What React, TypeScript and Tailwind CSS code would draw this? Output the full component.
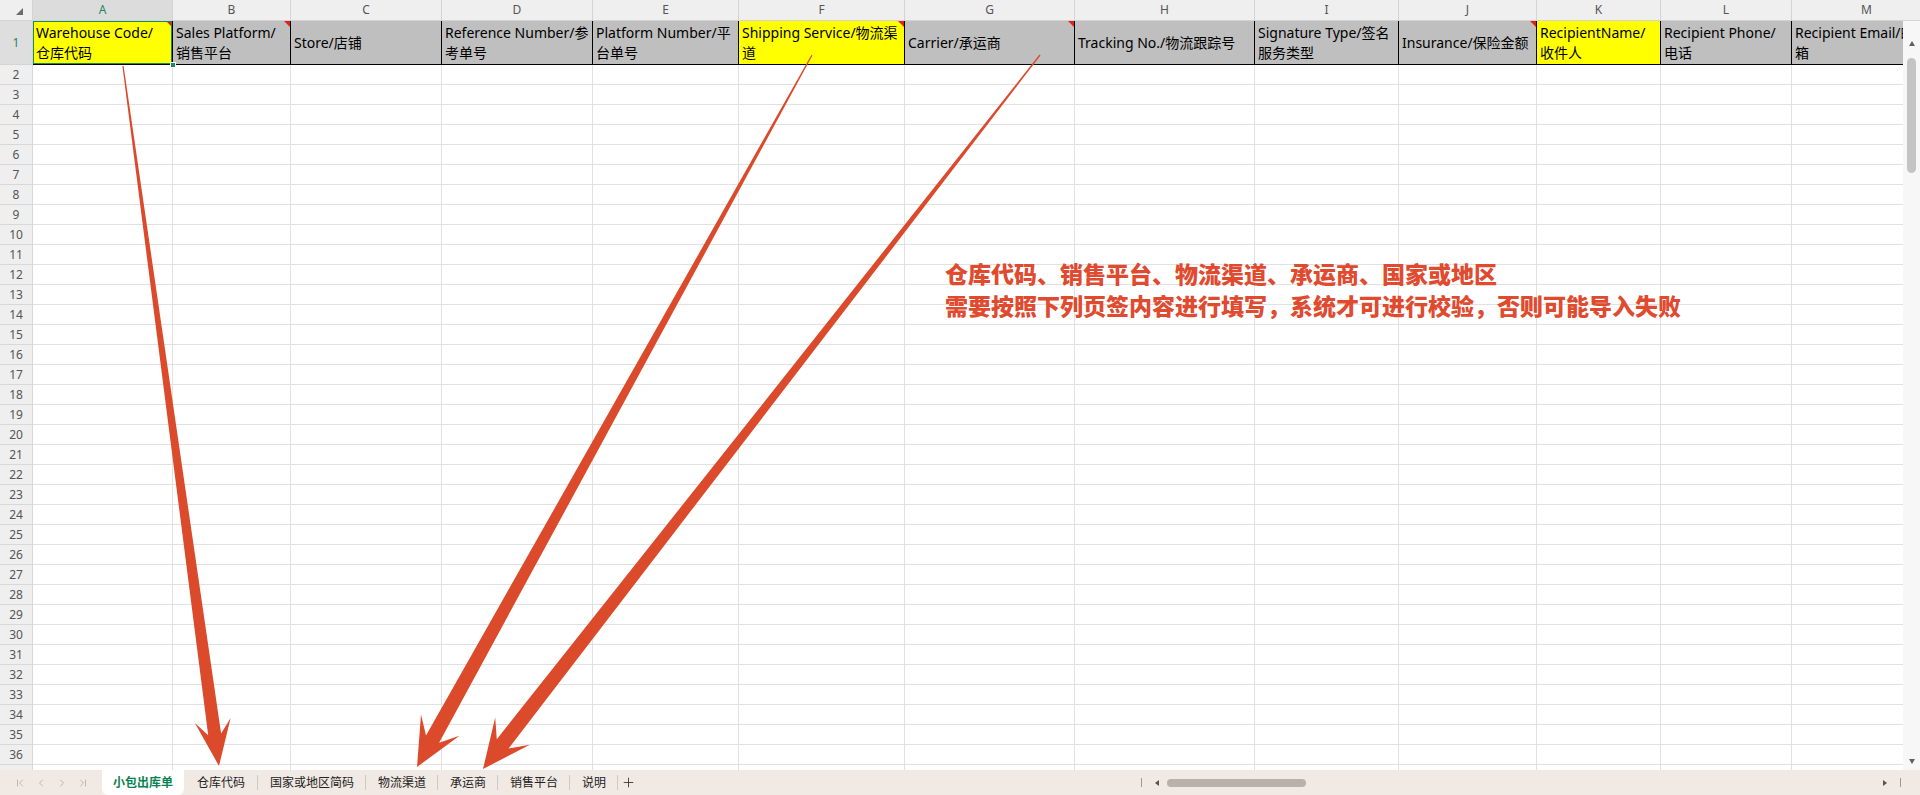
import { ChevronFirst, ChevronLast, ChevronLeft, ChevronRight, Plus } from "lucide-react";
import clsx from "clsx";

type Col = {
  key: string;
  w: string;
  lines: string[];
  fill: string;
  note?: boolean;
};

const cols: Col[] = [
  { key: "A", w: "w-[140px]", lines: ["Warehouse Code/", "仓库代码"], fill: "bg-[#ffff00]", note: true },
  { key: "B", w: "w-[118px]", lines: ["Sales Platform/", "销售平台"], fill: "bg-[#bfbfbf]", note: true },
  { key: "C", w: "w-[151px]", lines: ["Store/店铺"], fill: "bg-[#bfbfbf]" },
  { key: "D", w: "w-[151px]", lines: ["Reference Number/参", "考单号"], fill: "bg-[#bfbfbf]" },
  { key: "E", w: "w-[146px]", lines: ["Platform Number/平", "台单号"], fill: "bg-[#bfbfbf]" },
  { key: "F", w: "w-[166px]", lines: ["Shipping Service/物流渠", "道"], fill: "bg-[#ffff00]", note: true },
  { key: "G", w: "w-[170px]", lines: ["Carrier/承运商"], fill: "bg-[#bfbfbf]", note: true },
  { key: "H", w: "w-[180px]", lines: ["Tracking No./物流跟踪号"], fill: "bg-[#bfbfbf]" },
  { key: "I", w: "w-[144px]", lines: ["Signature Type/签名", "服务类型"], fill: "bg-[#bfbfbf]" },
  { key: "J", w: "w-[138px]", lines: ["Insurance/保险金额"], fill: "bg-[#bfbfbf]", note: true },
  { key: "K", w: "w-[124px]", lines: ["RecipientName/", "收件人"], fill: "bg-[#ffff00]" },
  { key: "L", w: "w-[131px]", lines: ["Recipient Phone/", "电话"], fill: "bg-[#bfbfbf]" },
  { key: "M", w: "w-[150px]", lines: ["Recipient Email/邮", "箱"], fill: "bg-[#bfbfbf]" },
];

const rows = Array.from({ length: 36 }, (_, i) => i + 2);

const tabs = [
  { name: "小包出库单", w: "w-[82px]", active: true },
  { name: "仓库代码", w: "w-[74px]" },
  { name: "国家或地区简码", w: "w-[108px]" },
  { name: "物流渠道", w: "w-[72px]" },
  { name: "承运商", w: "w-[60px]" },
  { name: "销售平台", w: "w-[72px]" },
  { name: "说明", w: "w-[48px]" },
];

// tapered callout arrow: thin at the start, widening toward a swept-back head
function arrowPoints(
  sx: number,
  sy: number,
  tx: number,
  ty: number,
  w1: number,
  neck: number,
  barb: number,
  half: number
) {
  const len = Math.hypot(tx - sx, ty - sy);
  const ux = (tx - sx) / len;
  const uy = (ty - sy) / len;
  const nx = -uy;
  const ny = ux;
  const p = (x: number, y: number) => `${x.toFixed(1)},${y.toFixed(1)}`;
  const nkx = tx - ux * neck;
  const nky = ty - uy * neck;
  const bx = tx - ux * barb;
  const by = ty - uy * barb;
  return [
    p(sx + nx * 0.6, sy + ny * 0.6),
    p(nkx + (nx * w1) / 2, nky + (ny * w1) / 2),
    p(bx + nx * half, by + ny * half),
    p(tx, ty),
    p(bx - nx * half, by - ny * half),
    p(nkx - (nx * w1) / 2, nky - (ny * w1) / 2),
    p(sx - nx * 0.6, sy - ny * 0.6),
  ].join(" ");
}

function Arrows() {
  return (
    <svg className="pointer-events-none absolute left-0 top-0" width="1920" height="795">
      <polygon points={arrowPoints(123, 66, 219, 766, 13, 32, 46, 18)} fill="#dc4a2c" />
      <polygon points={arrowPoints(812, 55, 417, 767, 15, 32, 48, 22)} fill="#dc4a2c" />
      <polygon points={arrowPoints(1040, 55, 483, 769, 15, 32, 48, 22)} fill="#dc4a2c" />
    </svg>
  );
}

function HeaderCell({ col }: { col: Col }) {
  const selected = col.key === "A";
  return (
    <div
      className={clsx(
        "relative flex h-full shrink-0 items-center overflow-hidden whitespace-nowrap border-b border-r border-black px-[3px] text-[14px] leading-[20px] text-black",
        col.w,
        col.fill
      )}
    >
      <div className="flex flex-col">
        {col.lines.map((l) => (
          <span key={l}>{l}</span>
        ))}
      </div>
      {col.note && (
        <span className="absolute right-0 top-0 h-0 w-0 border-l-[6px] border-t-[6px] border-l-transparent border-t-[#e0201b]" />
      )}
      {selected && <span className="absolute inset-[-1px] border-2 border-[#1c8a5a]" />}
    </div>
  );
}

export default function App() {
  return (
    <div className="relative flex h-[795px] w-[1920px] flex-col overflow-hidden bg-white font-['Noto_Sans','Noto_Sans_CJK_SC',sans-serif]">
      <div className="flex h-[770px] shrink-0">
        {/* sheet grid */}
        <div className="relative h-full w-[1903px] shrink-0 overflow-hidden">
          <div className="flex h-[21px] border-b border-[#d4d4d4] bg-[#efefef] text-[12px] text-[#555]">
            <div className="relative w-[33px] shrink-0 border-r border-[#d4d4d4]">
              <span className="absolute bottom-[5px] right-[9px] h-0 w-0 border-b-[7px] border-l-[7px] border-b-[#6b6b6b] border-l-transparent" />
            </div>
            {cols.map((c) => (
              <div
                key={c.key}
                className={clsx(
                  "flex shrink-0 items-center justify-center border-r border-[#d4d4d4]",
                  c.w,
                  c.key === "A" && "bg-[#dcdcdc] text-[#1c8a5a]"
                )}
              >
                {c.key}
              </div>
            ))}
          </div>

          <div className="flex h-[44px]">
            <div className="flex w-[33px] shrink-0 items-center justify-center border-b border-r border-[#d4d4d4] bg-[#dedede] text-[12px] text-[#1c8a5a]">
              1
            </div>
            {cols.map((c) => (
              <HeaderCell key={c.key} col={c} />
            ))}
            <span className="absolute left-[170px] top-[62px] h-[6px] w-[6px] border border-white bg-[#1c8a5a]" />
          </div>

          {rows.map((r) => (
            <div key={r} className="flex h-[20px]">
              <div className="flex w-[33px] shrink-0 items-center justify-center border-b border-r border-[#d8d8d8] bg-[#efefef] text-[12px] text-[#555]">
                {r}
              </div>
              {cols.map((c) => (
                <div key={c.key} className={clsx("shrink-0 border-b border-r border-[#e1e1e1]", c.w)} />
              ))}
            </div>
          ))}

          <div className="absolute left-[945px] top-[257px] font-['Noto_Sans_CJK_SC',sans-serif] text-[23px] font-black leading-[32px] text-[#e04a2f]">
            <p>仓库代码、销售平台、物流渠道、承运商、国家或地区</p>
            <p>需要按照下列页签内容进行填写，系统才可进行校验，否则可能导入失败</p>
          </div>
        </div>

        {/* vertical scrollbar */}
        <div className="flex w-[17px] shrink-0 flex-col">
          <div className="h-[21px] border-b border-[#d4d4d4] bg-[#efefef]" />
          <div className="flex flex-1 flex-col items-center bg-[#f7f7f7] pb-[6px] pt-[20px]">
            <span className="h-0 w-0 border-x-[3px] border-b-[5px] border-x-transparent border-b-[#606060]" />
            <span className="mt-[12px] h-[115px] w-[9px] rounded-full bg-[#c4c4c4]" />
            <span className="mt-auto h-0 w-0 border-x-[3px] border-t-[5px] border-x-transparent border-t-[#606060]" />
          </div>
        </div>
      </div>

      {/* sheet tabs + horizontal scrollbar */}
      <div className="flex h-[25px] shrink-0 items-center bg-[#f1e9e4] text-[12px] text-[#222]">
        <div className="flex w-[102px] shrink-0 items-center gap-[9px] pl-[14px] text-[#a8a8a8]">
          <ChevronFirst size={12} strokeWidth={1.5} />
          <ChevronLeft size={12} strokeWidth={1.5} />
          <ChevronRight size={12} strokeWidth={1.5} />
          <ChevronLast size={12} strokeWidth={1.5} />
        </div>
        {tabs.map((t) => (
          <div
            key={t.name}
            className={clsx(
              "flex h-full shrink-0 items-center justify-center",
              t.w,
              t.active ? "rounded-b-md bg-white font-semibold text-[#0b8350]" : "relative"
            )}
          >
            {t.name}
            {!t.active && <span className="absolute right-0 top-[5px] h-[15px] w-px bg-[#cfc8c3]" />}
          </div>
        ))}
        <Plus size={15} strokeWidth={1.4} className="ml-[3px] text-[#333]" />

        <div className="ml-auto flex items-center">
          <span className="h-[9px] w-px bg-[#9a9a9a]" />
          <span className="ml-[13px] h-0 w-0 border-y-[3px] border-r-[4px] border-y-transparent border-r-[#555]" />
          <span className="ml-[8px] h-[8px] w-[139px] rounded-full bg-[#b8b2ac]" />
          <div className="w-[577px]" />
          <span className="h-0 w-0 border-y-[3px] border-l-[4px] border-y-transparent border-l-[#555]" />
          <span className="ml-[13px] h-[9px] w-px bg-[#9a9a9a]" />
          <div className="w-[19px]" />
        </div>
      </div>

      <Arrows />
    </div>
  );
}
